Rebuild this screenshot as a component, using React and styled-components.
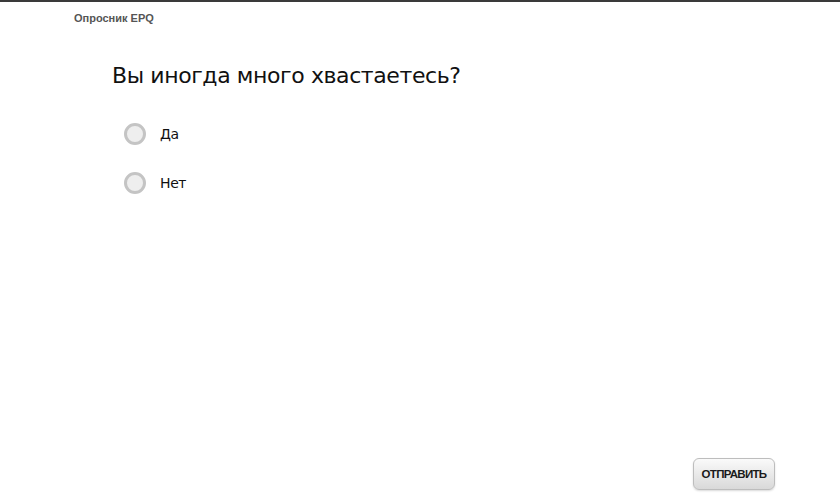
import React from "react";
import styled, { createGlobalStyle } from "styled-components";

const Global = createGlobalStyle`
  html, body { margin: 0; padding: 0; background: #fff; }
  body { width: 840px; height: 504px; overflow: hidden; }
  #root { height: 504px; }
`;

const Page = styled.div`
  box-sizing: border-box;
  width: 840px;
  height: 504px;
  border-top: 2px solid #3a3a3a;
  display: flex;
  flex-direction: column;
  position: relative;
`;

const Header = styled.div`
  padding: 10px 0 0 74px;
  font-family: "Liberation Sans", Arial, sans-serif;
  font-weight: bold;
  font-size: 11px;
  color: #555;
  height: 16px;
`;

const Main = styled.div`
  flex: 1;
  padding: 35px 0 0 112px;
  display: flex;
  flex-direction: column;
`;

const Question = styled.h1`
  margin: 0;
  font-family: "DejaVu Sans", Verdana, sans-serif;
  font-weight: normal;
  font-size: 22px;
  color: #111;
  letter-spacing: -0.4px;
`;

const Options = styled.div`
  margin-top: 35px;
  padding-left: 12px;
  display: flex;
  flex-direction: column;
  gap: 27px;
`;

const Option = styled.label`
  display: flex;
  align-items: center;
  gap: 14px;
  font-family: "DejaVu Sans", Verdana, sans-serif;
  font-size: 14px;
  letter-spacing: -0.4px;
  color: #111;
  height: 22px;
`;

const Radio = styled.span`
  box-sizing: border-box;
  width: 22px;
  height: 22px;
  border-radius: 50%;
  border: 3px solid #c4c4c4;
  background: #eeeeee;
`;

const Footer = styled.div`
  display: flex;
  justify-content: flex-end;
  padding: 0 65px 14px 0;
`;

const Button = styled.button`
  box-sizing: border-box;
  width: 82px;
  height: 32px;
  border: 1px solid #bdbdbd;
  border-radius: 6px;
  background: linear-gradient(#fafafa, #d9d9d9);
  box-shadow: 0 1px 2px rgba(0,0,0,0.15);
  font-family: "Liberation Sans", Arial, sans-serif;
  font-weight: bold;
  font-size: 11.5px;
  letter-spacing: -0.7px;
  color: #1a1a1a;
  padding: 0;
`;

export default function App() {
  return (
    <Page>
      <Global />
      <Header>Опросник EPQ</Header>
      <Main>
        <Question>Вы иногда много хвастаетесь?</Question>
        <Options>
          <Option><Radio />Да</Option>
          <Option><Radio />Нет</Option>
        </Options>
      </Main>
      <Footer>
        <Button>ОТПРАВИТЬ</Button>
      </Footer>
    </Page>
  );
}
